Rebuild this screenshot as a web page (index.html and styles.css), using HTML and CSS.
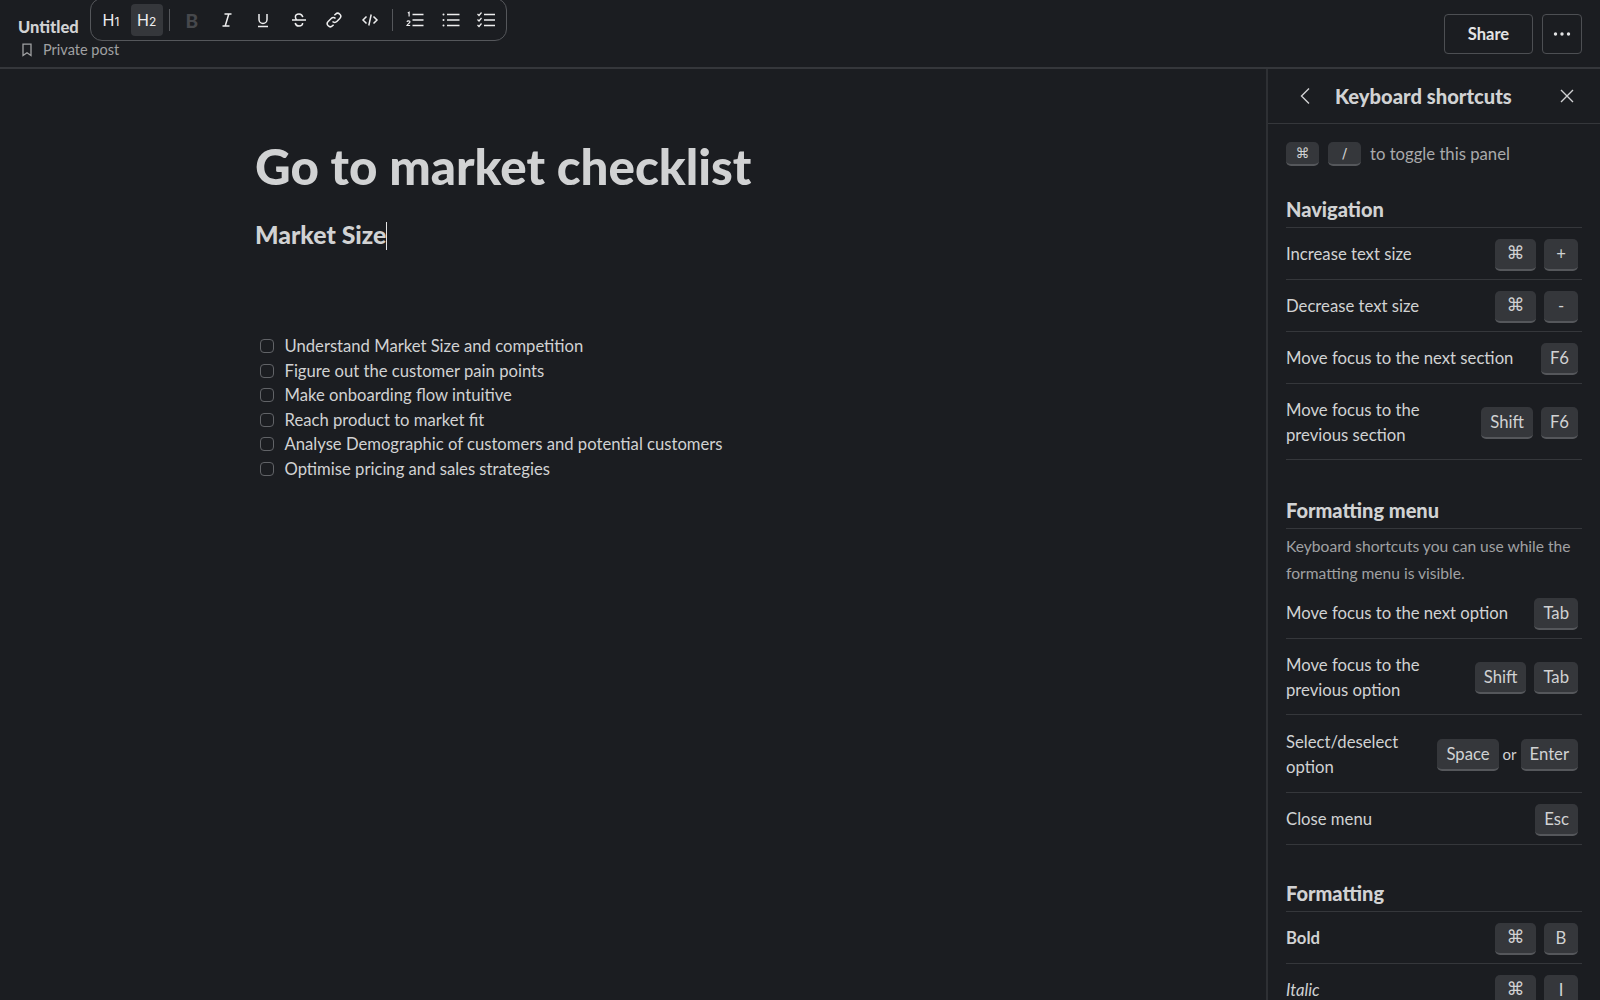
FILE: index.html
```html
<!DOCTYPE html>
<html lang="en">
<head>
  <meta charset="UTF-8">
  <title>Go to market checklist</title>
  <link rel="stylesheet" href="styles.css">
</head>
<body>
  <div id="page">
    <!-- top bar -->
    <header id="topBar">
      <div class="docInfo">
        <div class="docTitle">Untitled</div>
        <div class="docMeta">
          <svg class="bookmark" width="12" height="14" viewBox="0 0 12 14" fill="none" stroke="currentColor" stroke-width="1.3"><path d="M2 1.2h8v11.4L6 9.7l-4 2.9z"/></svg>
          <span>Private post</span>
        </div>
      </div>

      <!-- formatting toolbar -->
      <div id="toolbar">
        <button class="tool heading">H<small>1</small></button>
        <button class="tool heading active">H<small>2</small></button>
        <span class="toolSep"></span>
        <button class="tool boldOff">B</button>
        <button class="tool"><svg width="18" height="18" viewBox="0 0 18 18" fill="none" stroke="currentColor" stroke-width="1.5"><path d="M6.5 3h7M4.500 15h7M10.800 3L7.200 15"/></svg></button>
        <button class="tool"><svg width="18" height="18" viewBox="0 0 18 18" fill="none" stroke="currentColor" stroke-width="1.5"><path d="M5 3v5.500a4 4 0 0 0 8 0V3M4 15.500h10"/></svg></button>
        <button class="tool"><svg width="18" height="18" viewBox="0 0 18 18" fill="none" stroke="currentColor" stroke-width="1.5"><path d="M2 9h14M12.800 6.200C12.400 4.200 10.800 3 9 3 7 3 5.400 4.200 5.400 6c0 1 .4 2 1.400 3M5.200 12c.4 2 1.900 3 3.800 3 2 0 3.600-1.100 3.600-3"/></svg></button>
        <button class="tool"><svg width="18" height="18" viewBox="0 0 18 18" fill="none" stroke="currentColor" stroke-width="1.5"><path d="M7.500 10.500a3 3 0 0 0 4.300 0l3-3a3 3 0 0 0-4.300-4.300L9.400 4.300M10.500 7.500a3 3 0 0 0-4.300 0l-3 3a3 3 0 0 0 4.300 4.300l1.100-1.100"/></svg></button>
        <button class="tool"><svg width="18" height="18" viewBox="0 0 18 18" fill="none" stroke="currentColor" stroke-width="1.5"><path d="M5.500 5.500L2 9l3.500 3.500M12.500 5.500L16 9l-3.500 3.500M10.200 3.500L7.800 14.500"/></svg></button>
        <span class="toolSep"></span>
        <button class="tool"><svg width="18" height="18" viewBox="0 0 18 18" fill="none" stroke="currentColor" stroke-width="1.5"><path d="M6.500 3.500h11M6.500 9h11M6.500 14.500h11"/><path stroke-width="1.200" d="M1.800 2l1.300-.8v4.300M1 10.800c.3-1.400 3-1.200 3 0 0 1-2 1.900-3 3.700h3.200"/></svg></button>
        <button class="tool"><svg width="18" height="18" viewBox="0 0 18 18" fill="none" stroke="currentColor" stroke-width="1.5"><path d="M5 3.500h12.500M5 9h12.500M5 14.500h12.500"/><path stroke-width="2" stroke-linecap="round" d="M1.500 3.500h.01M1.500 9h.01M1.500 14.500h.01"/></svg></button>
        <button class="tool"><svg width="18" height="18" viewBox="0 0 18 18" fill="none" stroke="currentColor" stroke-width="1.5"><path d="M7 3.500h11M7 9h11M7 14.500h11"/><path stroke-width="1.200" d="M.5 3l1.500 1.500 2.500-3M.5 8.500L2 10l2.500-3M.5 14L2 15.500l2.500-3"/></svg></button>
      </div>

      <div class="topActions">
        <button class="shareBtn">Share</button>
        <button class="moreBtn"><svg width="20" height="6" viewBox="0 0 20 6" fill="currentColor"><circle cx="3.500" cy="3" r="1.700"/><circle cx="10" cy="3" r="1.700"/><circle cx="16.500" cy="3" r="1.700"/></svg></button>
      </div>
    </header>

    <div id="main">
      <!-- editor -->
      <section id="editor">
        <h1>Go to market checklist</h1>
        <h2>Market Size<span class="caret"></span></h2>
        <ul class="checklist">
          <li><span class="box"></span>Understand Market Size and competition</li>
          <li><span class="box"></span>Figure out the customer pain points</li>
          <li><span class="box"></span>Make onboarding flow intuitive</li>
          <li><span class="box"></span>Reach product to market fit</li>
          <li><span class="box"></span>Analyse Demographic of customers and potential customers</li>
          <li><span class="box"></span>Optimise pricing and sales strategies</li>
        </ul>
      </section>

      <!-- shortcuts panel -->
      <aside id="panel">
        <div class="panelHead">
          <svg width="12" height="18" viewBox="0 0 12 18" fill="none" stroke="currentColor" stroke-width="1.400"><path d="M10 1.500L2.500 9l7.500 7.500"/></svg>
          <span class="panelTitle">Keyboard shortcuts</span>
          <svg width="14" height="14" viewBox="0 0 14 14" fill="none" stroke="currentColor" stroke-width="1.400"><path d="M1 1l12 12M13 1L1 13"/></svg>
        </div>

        <div class="panelBody">
          <div class="toggleHint">
            <kbd class="small">⌘</kbd><kbd class="small">/</kbd>
            <span>to toggle this panel</span>
          </div>

          <h3 class="firstHead">Navigation</h3>
          <div class="row"><span>Increase text size</span><div class="keys"><kbd class="cmd">⌘</kbd><kbd>+</kbd></div></div>
          <div class="row"><span>Decrease text size</span><div class="keys"><kbd class="cmd">⌘</kbd><kbd>-</kbd></div></div>
          <div class="row"><span>Move focus to the next section</span><div class="keys"><kbd>F6</kbd></div></div>
          <div class="row tall"><span>Move focus to the<br>previous section</span><div class="keys"><kbd>Shift</kbd><kbd>F6</kbd></div></div>

          <h3>Formatting menu</h3>
          <p class="note">Keyboard shortcuts you can use while the formatting menu is visible.</p>
          <div class="row"><span>Move focus to the next option</span><div class="keys"><kbd>Tab</kbd></div></div>
          <div class="row tall"><span>Move focus to the<br>previous option</span><div class="keys"><kbd>Shift</kbd><kbd>Tab</kbd></div></div>
          <div class="row tall selectRow"><span>Select/deselect<br>option</span><div class="keys"><kbd>Space</kbd><span class="or">or</span><kbd>Enter</kbd></div></div>
          <div class="row"><span>Close menu</span><div class="keys"><kbd>Esc</kbd></div></div>

          <h3 class="lastHead">Formatting</h3>
          <div class="row"><span class="boldLabel">Bold</span><div class="keys"><kbd class="cmd">⌘</kbd><kbd>B</kbd></div></div>
          <div class="row"><span class="italicLabel">Italic</span><div class="keys"><kbd class="cmd">⌘</kbd><kbd>I</kbd></div></div>
        </div>
      </aside>
    </div>
  </div>
</body>
</html>
```

FILE: styles.css
```css
/* page */
html, body {
  margin: 0;
  padding: 0;
  height: 100%;
  overflow: hidden;
}
body {
  font-family: Lato, "Open Sans", Arial, sans-serif;
  background-color: #1b1d21;
  color: #d1d2d3;
}
#page {
  height: 1000px;
  display: flex;
  flex-direction: column;
}
button {
  font-family: inherit;
  background: none;
  border: none;
  color: inherit;
  padding: 0;
}

/* top bar */
#topBar {
  position: relative;
  height: 67px;
  flex: none;
  border-bottom: 2px solid #35373b;
  box-sizing: content-box;
  display: flex;
  justify-content: space-between;
  align-items: flex-start;
}
.docInfo {
  padding: 17px 0 0 18px;
}
.docTitle {
  font-size: 16.500px;
  font-weight: 900;
  line-height: 20px;
  color: #d1d2d3;
}
.docMeta {
  display: flex;
  align-items: center;
  gap: 10px;
  margin-top: 3px;
  padding-left: 3px;
  font-size: 14.500px;
  line-height: 20px;
  color: #a0a1a3;
}

/* toolbar floats over the top bar */
#toolbar {
  position: absolute;
  left: 90px;
  top: -2px;
  width: 417px;
  height: 43px;
  box-sizing: border-box;
  padding: 5px 0 0 4px;
  border: 1px solid #55575b;
  border-radius: 12px;
  display: flex;
  align-items: flex-start;
  gap: 3.600px;
}
.tool {
  width: 32px;
  height: 32px;
  border-radius: 4px;
  display: flex;
  align-items: center;
  justify-content: center;
  color: #eeeeef;
}
.tool.heading {
  font-size: 16px;
  font-family: Inter, sans-serif;
  line-height: 1;
}
.tool.heading small {
  font-size: 12px;
  margin-top: 4px;
}
.tool.active {
  background-color: #35373b;
}
.tool.boldOff {
  color: #46484c;
  font-size: 19px;
  font-weight: 900;
}
.toolSep {
  width: 1px;
  height: 22px;
  margin: 5px 2.500px;
  background-color: #55575b;
}
.topActions {
  display: flex;
  gap: 9px;
  padding: 14px 18px 0 0;
}
.shareBtn, .moreBtn {
  height: 40px;
  border: 1px solid #4d4f53;
  border-radius: 4px;
  box-sizing: border-box;
  color: #e3e3e4;
}
.shareBtn {
  width: 89px;
  font-size: 16.500px;
  font-weight: 700;
}
.moreBtn {
  width: 40px;
  display: flex;
  align-items: center;
  justify-content: center;
}

/* body */
#main {
  flex: 1;
  display: flex;
  min-height: 0;
}
#editor {
  flex: 1;
  padding: 0 0 0 255px;
}
#editor h1 {
  margin: 65px 0 0;
  font-size: 49.300px;
  line-height: 64px;
  font-weight: 900;
  color: #d1d2d3;
}
#editor h2 {
  margin: 19px 0 0;
  font-size: 24.800px;
  line-height: 36px;
  font-weight: 900;
  color: #d1d2d3;
}
.caret {
  display: inline-block;
  width: 1px;
  height: 28px;
  vertical-align: -6px;
  background-color: #e3e3e4;
}
.checklist {
  list-style: none;
  margin: 81px 0 0;
  padding: 0;
  font-size: 16.650px;
  line-height: 24.500px;
}
.checklist li {
  display: flex;
  align-items: center;
}
.box {
  width: 12px;
  height: 12px;
  margin: 0 10.500px 0 5px;
  border: 1.500px solid #616367;
  border-radius: 4px;
}

/* shortcuts panel */
#panel {
  width: 334px;
  flex: none;
  border-left: 2px solid #2e3034;
  box-sizing: border-box;
  overflow: hidden;
}
.panelHead {
  height: 55px;
  box-sizing: border-box;
  border-bottom: 1px solid #35373b;
  display: flex;
  align-items: center;
  padding: 0 26px 0 31px;
  color: #d1d2d3;
}
.panelTitle {
  flex: 1;
  margin-left: 24px;
  font-size: 20.200px;
  font-weight: 900;
}
.panelBody {
  padding: 0 18px 0 18px;
}
.toggleHint {
  display: flex;
  align-items: center;
  height: 60px;
  gap: 9px;
  font-size: 16.700px;
  color: #a9aaab;
}
h3 {
  margin: 37px 0 0;
  height: 32px;
  box-sizing: border-box;
  border-bottom: 1px solid #35373b;
  font-size: 20px;
  line-height: 26px;
  font-weight: 900;
  color: #d1d2d3;
}
h3.firstHead {
  margin-top: 12px;
}
h3.lastHead {
  margin-top: 35px;
}
.note {
  margin: 0;
  padding: 4px 0 1px;
  font-size: 15.600px;
  line-height: 26.500px;
  color: #a0a1a3;
}
.row {
  min-height: 52px;
  box-sizing: border-box;
  border-bottom: 1px solid #35373b;
  display: flex;
  align-items: center;
  justify-content: space-between;
  padding: 2px 4px 0 0;
  font-size: 16.700px;
  line-height: 24.500px;
}
.row.tall {
  min-height: 76px;
}
.row.selectRow {
  min-height: 78px;
}
.keys {
  display: flex;
  align-items: center;
  gap: 8px;
}
.or {
  margin: 0 -4px;
  font-size: 15px;
}
kbd {
  min-width: 34px;
  height: 32px;
  box-sizing: border-box;
  padding: 2px 9px 0;
  background-color: #35373b;
  border-bottom: 2px solid #55575b;
  border-radius: 5px;
  display: flex;
  align-items: center;
  justify-content: center;
  font-family: Lato, sans-serif;
  font-size: 16.700px;
  color: #d1d2d3;
}
kbd.cmd {
  width: 41px;
  padding-top: 0;
  font-family: "DejaVu Sans", sans-serif;
  font-size: 18px;
}
kbd.small {
  width: 33px;
  min-width: 0;
  height: 24px;
  padding: 0;
  font-family: "DejaVu Sans", sans-serif;
  font-size: 14px;
}
.boldLabel {
  font-weight: 700;
}
.italicLabel {
  font-style: italic;
}
```
